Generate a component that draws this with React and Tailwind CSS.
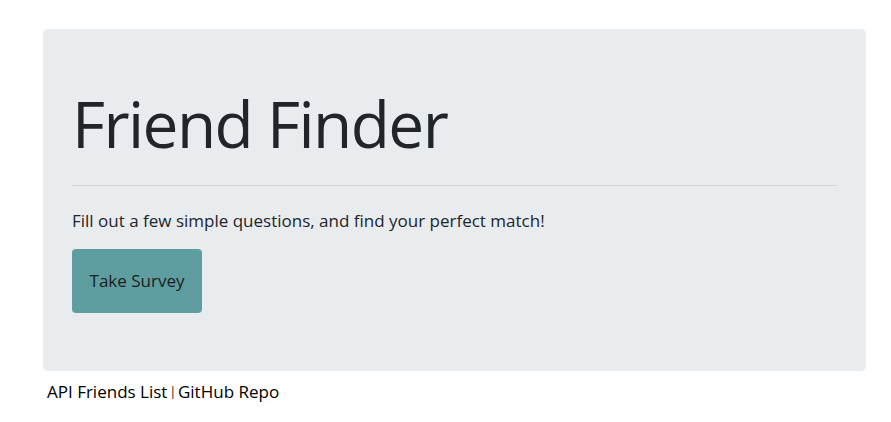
import React from 'react';

const App = () => {
  return (
    <div className="min-h-screen bg-white pt-[29px] pl-[43px] text-[#212529]" style={{ fontFamily: '"Open Sans", "Noto Sans", sans-serif' }}>
      <div className="w-[823px] h-[342px] bg-[#e9ecef] rounded-[5px] px-[29px] pt-[55px]">
        <h1 className="text-[64px] font-normal leading-[80px] tracking-[-1.6px]">Friend Finder</h1>
        <hr className="mt-[21px] border-t border-[#d3d6d9]" />
        <p className="mt-[22px] text-[17px] leading-[26px]">Fill out a few simple questions, and find your perfect match!</p>
        <button className="mt-[15px] w-[130px] h-[64px] bg-[#5f9ea0] rounded-[4px] text-[17px] text-[#1a1d20]">
          Take Survey
        </button>
      </div>
      <div className="mt-[8px] pl-[4px] text-[17px] leading-[26px] text-black flex items-center">
        <a href="#">API Friends List</a>
        <span className="text-[12px] mx-[2px]">|</span>
        <a href="#">GitHub Repo</a>
      </div>
    </div>
  );
};

export default App;
